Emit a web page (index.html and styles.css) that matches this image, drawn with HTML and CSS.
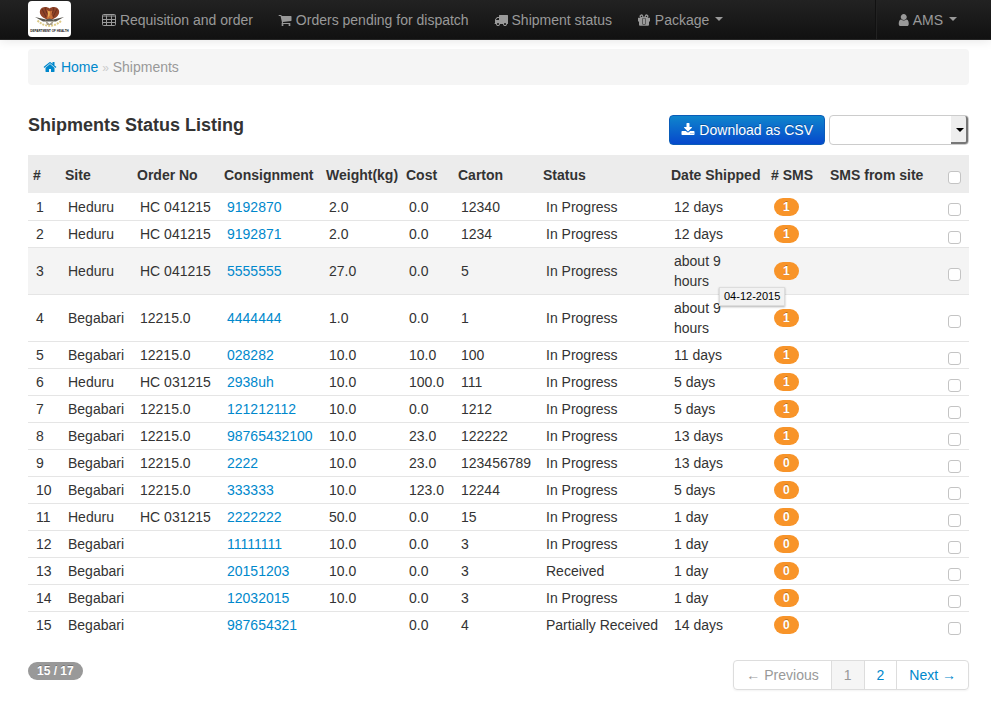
FILE: index.html
```html
<!DOCTYPE html>
<html lang="en">
<head>
<meta charset="utf-8">
<title>Shipments</title>
<link rel="stylesheet" href="styles.css">
</head>
<body>
<header class="navbar">
  <a class="brand" href="#" aria-label="Department of Health">
    <svg class="logo" viewBox="0 0 43 36">
      <path d="M21.500 7.500C19 5 13 5.500 12 9.500c-.8 3.500 1.500 6 4 7.500l5.500 3 5.500-3c2.500-1.500 4.800-4 4-7.500-1-4-7-4.500-9.500-2z" fill="#8f4226"/>
      <path d="M14 8l4 8M17 6.500l2 6M29 8l-4 8M26 6.500l-2 6" stroke="#66301e" stroke-width="1"/>
      <path d="M18.500 8.500l3 2 3-1-1 4 1.500 3-3.500 3.500-3-3 1.500-4z" fill="#c8713a"/>
      <path d="M20 10l2 .5-.5 4-1.500 2z" fill="#e5ac55"/>
      <path d="M7 16l11 2.500 3.500-1 3.500 1L36 16l-8 4.500H15z" fill="#5a574f"/>
      <path d="M9.500 19.500c7 7 17 7 24 0" fill="none" stroke="#dcc985" stroke-width="2" stroke-dasharray="2 1"/>
      <path d="M17 19l4.500 4 4.500-4-2 5h-5z" fill="#a89f8d"/>
      <text x="21.500" y="30.500" text-anchor="middle" class="logo-text">DEPARTMENT OF HEALTH</text>
    </svg>
  </a>
  <nav class="menu">
    <a href="#"><svg class="icon" viewBox="0 0 14 14"><path fill="none" stroke="currentColor" stroke-width="1" d="M1.500 1.500h11a1 1 0 0 1 1 1v9a1 1 0 0 1-1 1h-11a1 1 0 0 1-1-1v-9a1 1 0 0 1 1-1zM.5 3h13M.5 6.500h13M.5 9.500h13M4.500 2.500v10M9.500 2.500v10"/></svg> Requisition and order</a>
    <a href="#"><svg class="icon" viewBox="0 0 1792 1792"><path d="M704 1536q0 52-38 90t-90 38-90-38-38-90 38-90 90-38 90 38 38 90zm896 0q0 52-38 90t-90 38-90-38-38-90 38-90 90-38 90 38 38 90zm128-1088v512q0 24-16.500 42.500t-40.500 21.500l-1044 122q13 60 13 70 0 16-24 64h920q26 0 45 19t19 45-19 45-45 19h-1024q-26 0-45-19t-19-45q0-11 8-31.500t16-36 21.500-40 15.500-29.500l-177-823h-204q-26 0-45-19t-19-45 19-45 45-19h256q16 0 28.500 6.500t19.500 15.500 13 24.500 8 26 5.500 29.500 4.500 26h1201q26 0 45 19t19 45z"/></svg> Orders pending for dispatch</a>
    <a href="#"><svg class="icon" viewBox="0 0 1792 1792"><path d="M640 1408q0-52-38-90t-90-38-90 38-38 90 38 90 90 38 90-38 38-90zm-384-512h384v-256h-158q-13 0-22 9l-195 195q-9 9-9 22v30zm1280 512q0-52-38-90t-90-38-90 38-38 90 38 90 90 38 90-38 38-90zm256-1088v1024q0 15-4 26.500t-13.500 18.500-16.500 11.500-23.500 6-22.500 2-25.500 0-22.500-.5q0 106-75 181t-181 75-181-75-75-181h-384q0 106-75 181t-181 75-181-75-75-181h-64q-3 0-22.500.5t-25.500 0-22.500-2-23.500-6-16.500-11.500-13.500-18.500-4-26.500q0-26 19-45t45-19v-320q0-8-.5-35t0-38 2.500-34.500 6.500-37 14-30.500 22.500-30l198-198q19-19 50.500-32t58.500-13h160v-192q0-26 19-45t45-19h1024q26 0 45 19t19 45z"/></svg> Shipment status</a>
    <a href="#"><svg class="icon" viewBox="0 0 14 14"><path d="M1.300 4.800h4.200V12.800H3a1 1 0 0 1-1-1V8.500H1V5.100zM8.500 4.800h4.200l.3.300v3.400h-1v3.300a1 1 0 0 1-1 1H8.500zM6 5.500h2V11H6zM5.500 11.500h3v1.300h-3z"/><path fill="none" stroke="currentColor" stroke-width="1.300" d="M6.300 4.600H4.400a1.300 1.300 0 1 1 .9-2.300zM7.700 4.600h1.900a1.300 1.300 0 1 0-.9-2.300z"/></svg> Package <span class="caret"></span></a>
  </nav>
  <nav class="account">
    <a href="#"><svg class="icon" viewBox="0 0 1600 1792"><path d="M1536 1399q0 109-62.500 187t-150.500 78h-854q-88 0-150.500-78t-62.500-187q0-85 8.500-160.500t31.500-152 58.500-131 94-89 134.500-34.500q131 128 313 128t313-128q76 0 134.500 34.500t94 89 58.500 131 31.500 152 8.500 160.500zm-256-887q0 159-112.500 271.500t-271.500 112.500-271.500-112.500-112.500-271.500 112.500-271.500 271.500-112.500 271.500 112.500 112.500 271.500z"/></svg> AMS <span class="caret"></span></a>
  </nav>
</header>

<main class="page">
  <nav class="breadcrumb" aria-label="Breadcrumb">
    <a href="#"><svg class="icon" viewBox="0 0 1792 1792"><path d="M1472 992v480q0 26-19 45t-45 19h-384v-384h-256v384h-384q-26 0-45-19t-19-45v-480q0-1 .5-3t.5-3l575-474 575 474q1 2 1 6zm223-69l-62 74q-8 9-21 11h-3q-13 0-21-7l-692-577-692 577q-12 8-24 7-13-2-21-11l-62-74q-8-10-7-23.500t11-21.500l719-599q32-26 76-26t76 26l244 204v-195q0-14 9-23t23-9h192q14 0 23 9t9 23v408l219 182q10 8 11 21.500t-7 23.500z"/></svg> Home</a>
    <span class="divider">»</span>
    <span>Shipments</span>
  </nav>

  <div class="heading">
    <h1>Shipments Status Listing</h1>
    <div class="actions">
      <button type="button" class="download"><svg class="icon" viewBox="0 0 1792 1792"><path d="M1344 1344q0-26-19-45t-45-19-45 19-19 45 19 45 45 19 45-19 19-45zm256 0q0-26-19-45t-45-19-45 19-19 45 19 45 45 19 45-19 19-45zm128-224v320q0 40-28 68t-68 28h-1472q-40 0-68-28t-28-68v-320q0-40 28-68t68-28h465l135 136q58 56 136 56t136-56l136-136h464q40 0 68 28t28 68zm-325-569q17 41-14 70l-448 448q-18 19-45 19t-45-19l-448-448q-31-29-14-70 17-39 59-39h256v-448q0-26 19-45t45-19h256q26 0 45 19t19 45v448h256q42 0 59 39z"/></svg> Download as CSV</button>
      <span class="select"><select aria-label="Status"><option></option></select></span>
    </div>
  </div>

  <table class="shipments">
    <colgroup>
      <col class="c-num"><col class="c-site"><col class="c-order"><col class="c-consignment"><col class="c-weight"><col class="c-cost"><col class="c-carton"><col class="c-status"><col class="c-date"><col class="c-sms"><col class="c-from"><col class="c-check">
    </colgroup>
    <thead>
      <tr><th>#</th><th>Site</th><th>Order No</th><th>Consignment</th><th>Weight(kg)</th><th>Cost</th><th>Carton</th><th>Status</th><th>Date Shipped</th><th># SMS</th><th>SMS from site</th><th class="check"><input type="checkbox" aria-label="Select all"></th></tr>
    </thead>
    <tbody>
      <tr><td>1</td><td>Heduru</td><td>HC 041215</td><td><a href="#">9192870</a></td><td>2.0</td><td>0.0</td><td>12340</td><td>In Progress</td><td>12 days</td><td><span class="badge sms">1</span></td><td></td><td class="check"><input type="checkbox" aria-label="Select 1"></td></tr>
      <tr><td>2</td><td>Heduru</td><td>HC 041215</td><td><a href="#">9192871</a></td><td>2.0</td><td>0.0</td><td>1234</td><td>In Progress</td><td>12 days</td><td><span class="badge sms">1</span></td><td></td><td class="check"><input type="checkbox" aria-label="Select 2"></td></tr>
      <tr class="active"><td>3</td><td>Heduru</td><td>HC 041215</td><td><a href="#">5555555</a></td><td>27.0</td><td>0.0</td><td>5</td><td>In Progress</td><td class="has-tip">about 9 hours<span class="tip" role="tooltip">04-12-2015</span></td><td><span class="badge sms">1</span></td><td></td><td class="check"><input type="checkbox" aria-label="Select 3"></td></tr>
      <tr><td>4</td><td>Begabari</td><td>12215.0</td><td><a href="#">4444444</a></td><td>1.0</td><td>0.0</td><td>1</td><td>In Progress</td><td>about 9 hours</td><td><span class="badge sms">1</span></td><td></td><td class="check"><input type="checkbox" aria-label="Select 4"></td></tr>
      <tr><td>5</td><td>Begabari</td><td>12215.0</td><td><a href="#">028282</a></td><td>10.0</td><td>10.0</td><td>100</td><td>In Progress</td><td>11 days</td><td><span class="badge sms">1</span></td><td></td><td class="check"><input type="checkbox" aria-label="Select 5"></td></tr>
      <tr><td>6</td><td>Heduru</td><td>HC 031215</td><td><a href="#">2938uh</a></td><td>10.0</td><td>100.0</td><td>111</td><td>In Progress</td><td>5 days</td><td><span class="badge sms">1</span></td><td></td><td class="check"><input type="checkbox" aria-label="Select 6"></td></tr>
      <tr><td>7</td><td>Begabari</td><td>12215.0</td><td><a href="#">121212112</a></td><td>10.0</td><td>0.0</td><td>1212</td><td>In Progress</td><td>5 days</td><td><span class="badge sms">1</span></td><td></td><td class="check"><input type="checkbox" aria-label="Select 7"></td></tr>
      <tr><td>8</td><td>Begabari</td><td>12215.0</td><td><a href="#">98765432100</a></td><td>10.0</td><td>23.0</td><td>122222</td><td>In Progress</td><td>13 days</td><td><span class="badge sms">1</span></td><td></td><td class="check"><input type="checkbox" aria-label="Select 8"></td></tr>
      <tr><td>9</td><td>Begabari</td><td>12215.0</td><td><a href="#">2222</a></td><td>10.0</td><td>23.0</td><td>123456789</td><td>In Progress</td><td>13 days</td><td><span class="badge sms">0</span></td><td></td><td class="check"><input type="checkbox" aria-label="Select 9"></td></tr>
      <tr><td>10</td><td>Begabari</td><td>12215.0</td><td><a href="#">333333</a></td><td>10.0</td><td>123.0</td><td>12244</td><td>In Progress</td><td>5 days</td><td><span class="badge sms">0</span></td><td></td><td class="check"><input type="checkbox" aria-label="Select 10"></td></tr>
      <tr><td>11</td><td>Heduru</td><td>HC 031215</td><td><a href="#">2222222</a></td><td>50.0</td><td>0.0</td><td>15</td><td>In Progress</td><td>1 day</td><td><span class="badge sms">0</span></td><td></td><td class="check"><input type="checkbox" aria-label="Select 11"></td></tr>
      <tr><td>12</td><td>Begabari</td><td></td><td><a href="#">11111111</a></td><td>10.0</td><td>0.0</td><td>3</td><td>In Progress</td><td>1 day</td><td><span class="badge sms">0</span></td><td></td><td class="check"><input type="checkbox" aria-label="Select 12"></td></tr>
      <tr><td>13</td><td>Begabari</td><td></td><td><a href="#">20151203</a></td><td>10.0</td><td>0.0</td><td>3</td><td>Received</td><td>1 day</td><td><span class="badge sms">0</span></td><td></td><td class="check"><input type="checkbox" aria-label="Select 13"></td></tr>
      <tr><td>14</td><td>Begabari</td><td></td><td><a href="#">12032015</a></td><td>10.0</td><td>0.0</td><td>3</td><td>In Progress</td><td>1 day</td><td><span class="badge sms">0</span></td><td></td><td class="check"><input type="checkbox" aria-label="Select 14"></td></tr>
      <tr><td>15</td><td>Begabari</td><td></td><td><a href="#">987654321</a></td><td></td><td>0.0</td><td>4</td><td>Partially Received</td><td>14 days</td><td><span class="badge sms">0</span></td><td></td><td class="check"><input type="checkbox" aria-label="Select 15"></td></tr>
    </tbody>
  </table>

  <footer class="foot">
    <span class="badge">15 / 17</span>
    <nav class="pagination" aria-label="Pages">
      <a class="muted" href="#">← Previous</a>
      <a class="current" href="#">1</a>
      <a href="#">2</a>
      <a href="#">Next →</a>
    </nav>
  </footer>
</main>
</body>
</html>
```
FILE: styles.css
```css
* { box-sizing: border-box; }

body {
  margin: 0;
  background: #fff;
  color: #333;
  font: 14px/20px "Liberation Sans", Arial, sans-serif;
}

a { color: #0088cc; text-decoration: none; }

.icon {
  width: 14px;
  height: 14px;
  fill: currentColor;
  vertical-align: -2px;
}

.caret {
  display: inline-block;
  margin-left: 2px;
  border: 4px solid transparent;
  border-top-color: currentColor;
  border-bottom: 0;
  vertical-align: 4px;
}

.navbar {
  display: flex;
  height: 40px;
  padding-left: 28px;
  background: linear-gradient(#222, #111);
  border-bottom: 1px solid #252525;
  box-shadow: 0 1px 10px rgba(0, 0, 0, 0.1);
}
.navbar a { color: #999; }
.brand { width: 62px; padding-top: 1px; }
.logo {
  display: block;
  width: 43px;
  height: 36px;
  background: #fff;
  border-radius: 4px;
}
.logo-text { font: bold 3px "Liberation Sans", Arial, sans-serif; fill: #111; }
.menu { display: flex; flex: 1; gap: 1px; }
.menu a, .account a { padding: 10px 12px; white-space: nowrap; }
.account {
  display: flex;
  padding: 0 22px 0 8px;
  border-left: 1px solid #111;
  box-shadow: inset 1px 0 #222;
}

.page { padding: 9px 22px 14px 28px; }

.breadcrumb {
  padding: 8px 15px 7px;
  background: #f5f5f5;
  border-radius: 4px;
  color: #999;
}
.divider { color: #ccc; font-size: 12px; }

.heading {
  display: flex;
  align-items: center;
  justify-content: space-between;
  margin: 30px 0 10px;
}
h1 { margin: 0 0 10px; font-size: 18px; line-height: 20px; }
.actions { display: flex; gap: 4px; }
.download {
  height: 30px;
  padding: 0 11px;
  border: 1px solid #0a5cb8;
  border-radius: 4px;
  background: linear-gradient(#0f85cc, #0648cc);
  color: #fff;
  font: inherit;
  text-shadow: 0 -1px 0 rgba(0, 0, 0, 0.25);
}
.select { position: relative; width: 140px; height: 30px; }
.select select {
  width: 100%;
  height: 100%;
  border: 1px solid #ccc;
  border-radius: 4px;
  background: #fff;
  appearance: none;
}
.select::before {
  content: "";
  position: absolute;
  inset: 1px 1px 1px auto;
  width: 15px;
  background: #eee;
  border-right: 2px solid #777;
  border-bottom: 2px solid #777;
  border-radius: 0 3px 3px 0;
  pointer-events: none;
}
.select::after {
  content: "";
  position: absolute;
  top: 13px;
  right: 5px;
  border: 4px solid transparent;
  border-top-color: #000;
  border-bottom: 0;
  pointer-events: none;
}

.shipments { width: 100%; table-layout: fixed; border-collapse: separate; border-spacing: 0; }
.c-num { width: 32px; }
.c-site { width: 72px; }
.c-order { width: 87px; }
.c-consignment { width: 102px; }
.c-weight { width: 80px; }
.c-cost { width: 52px; }
.c-carton { width: 85px; }
.c-status { width: 128px; }
.c-date { width: 100px; }
.c-sms { width: 59px; }
.c-from { width: 118px; }
.c-check { width: 26px; }
.shipments th {
  height: 38px;
  padding: 2px 0 0 5px;
  background: #ececec;
  text-align: left;
  white-space: nowrap;
}
.shipments td { padding: 4px 8px 3px; }
.shipments td:nth-child(8) { white-space: nowrap; }
.shipments tr + tr td { padding-top: 3px; border-top: 1px solid #e5e5e5; }
.shipments .active td { background: #f4f4f4; }
.shipments .check, .shipments tr + tr .check { padding: 6px 0 0 5px; line-height: 12px; }
.check input {
  display: block;
  width: 13px;
  height: 13px;
  margin: 0;
  appearance: none;
  background: #fff;
  border: 1px solid #c4c4c4;
  border-radius: 3px;
}

.badge {
  display: inline-block;
  padding: 2px 9px;
  border-radius: 9px;
  background: #999;
  color: #fff;
  font-size: 12px;
  font-weight: bold;
  line-height: 14px;
  text-shadow: 0 -1px 0 rgba(0, 0, 0, 0.25);
}
.sms { display: block; width: max-content; background: #f89429; }

.has-tip { position: relative; }
.tip {
  position: absolute;
  z-index: 1;
  top: 39px;
  left: 53px;
  padding: 0 4px;
  border: 1px solid #ddd;
  background: #f2f2f2;
  box-shadow: 0 1px 2px rgba(0, 0, 0, 0.3);
  color: #000;
  font-size: 11px;
  line-height: 17px;
  white-space: nowrap;
}

.foot {
  display: flex;
  align-items: flex-start;
  justify-content: space-between;
  padding-top: 22px;
}
.foot .badge { margin-top: 2px; }
.pagination {
  display: flex;
  border: 1px solid #ddd;
  border-radius: 4px;
  box-shadow: 0 1px 2px rgba(0, 0, 0, 0.05);
}
.pagination a { padding: 0 12px; line-height: 28px; }
.pagination a + a { border-left: 1px solid #ddd; }
.pagination .muted, .pagination .current { color: #999; }
.pagination .current { background: #f5f5f5; }
```
